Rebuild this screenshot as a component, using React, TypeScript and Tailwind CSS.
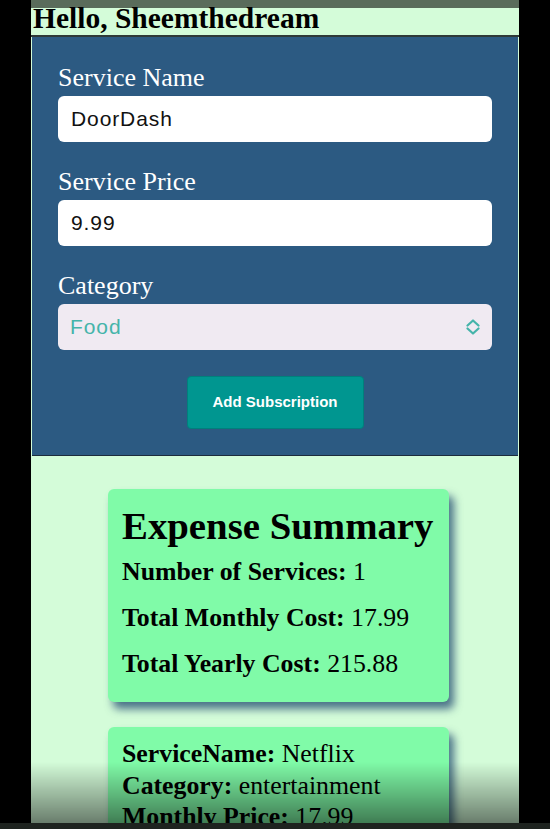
import React from "react";

const serif = { fontFamily: '"Liberation Serif", "Times New Roman", serif' };
const sans = { fontFamily: '"Liberation Sans", Arial, sans-serif' };

function Field({ label, value }: { label: string; value: string }) {
  return (
    <div className="mb-[26px]">
      <label className="block text-[26px] leading-[28px] text-white mb-[4px]" style={serif}>
        {label}
      </label>
      <div
        className="h-[46px] rounded-[6px] bg-white px-[13px] flex items-center text-[21px] tracking-[0.9px] text-[#111]"
        style={sans}
      >
        {value}
      </div>
    </div>
  );
}

function UpDown() {
  return (
    <svg width="14" height="16" viewBox="0 0 14 16" fill="none" stroke="#45b4aa" strokeWidth="2.2" strokeLinecap="round" strokeLinejoin="round">
      <path d="M1.5 6.5 L7 1.5 L12.5 6.5" />
      <path d="M1.5 9.5 L7 14.5 L12.5 9.5" />
    </svg>
  );
}

export default function App() {
  return (
    <div className="min-h-screen bg-black">
      <div className="mx-auto w-[488px] bg-[#d4fcd9] pb-[60px]">
        <div className="h-[8px] bg-[#5a6c5b]" />
        <h1
          className="h-[29px] leading-[20px] text-[29.5px] font-bold text-black pl-[2px] border-b-2 border-[#2e3a38]"
          style={serif}
        >
          Hello, Sheemthedream
        </h1>
        <div className="mx-[1px] bg-[#2c5a82] px-[26px] pt-[27px] pb-[26px] border-b border-[#1c2c3c]">
          <Field label="Service Name" value="DoorDash" />
          <Field label="Service Price" value="9.99" />
          <div className="mb-[26px]">
            <label className="block text-[26px] leading-[28px] text-white mb-[4px]" style={serif}>
              Category
            </label>
            <div
              className="h-[46px] rounded-[6px] bg-[#f0eaf2] pl-[12px] pr-[12px] flex items-center justify-between text-[21px] tracking-[0.9px] text-[#45b4aa]"
              style={sans}
            >
              <span>Food</span>
              <UpDown />
            </div>
          </div>
          <div className="flex justify-center">
            <button
              className="w-[177px] h-[53px] rounded-[4px] bg-[#009690] border border-[#00807c] text-white font-bold text-[15px]"
              style={sans}
            >
              Add Subscription
            </button>
          </div>
        </div>
        <div className="pt-[33px]" style={serif}>
          <div className="ml-[77px] w-[341px] rounded-[6px] bg-[#80fba8] pl-[14px] pr-[6px] pt-[15px] pb-[23px] shadow-[5px_7px_9px_rgba(30,70,110,0.75)]">
            <h2 className="text-[38.8px] leading-[44px] font-bold text-black whitespace-nowrap">Expense Summary</h2>
            <div className="mt-[9px] flex flex-col gap-[16px] text-[25.8px] leading-[30px] text-black">
              <p>
                <b>Number of Services:</b> 1
              </p>
              <p>
                <b>Total Monthly Cost:</b> 17.99
              </p>
              <p>
                <b>Total Yearly Cost:</b> 215.88
              </p>
            </div>
          </div>
          <div className="mt-[25px] ml-[77px] w-[341px] rounded-[6px] bg-[#80fba8] pl-[14px] pr-[10px] pt-[11px] pb-[20px] shadow-[5px_7px_9px_rgba(30,70,110,0.75)] text-[25.8px] leading-[31.5px] text-black">
            <p>
              <b>ServiceName:</b> Netflix
            </p>
            <p>
              <b>Category:</b> entertainment
            </p>
            <p>
              <b>Monthly Price:</b> 17.99
            </p>
            <p>
              <b>Yearly Price:</b> 215.88
            </p>
          </div>
        </div>
      </div>
      <div className="fixed left-0 right-0 bottom-0 pointer-events-none">
        <div className="h-[61px] bg-gradient-to-b from-[rgba(0,0,0,0)] to-[rgba(0,0,0,0.5)]" />
        <div className="h-[6px] bg-[#1e231f]" />
      </div>
    </div>
  );
}
